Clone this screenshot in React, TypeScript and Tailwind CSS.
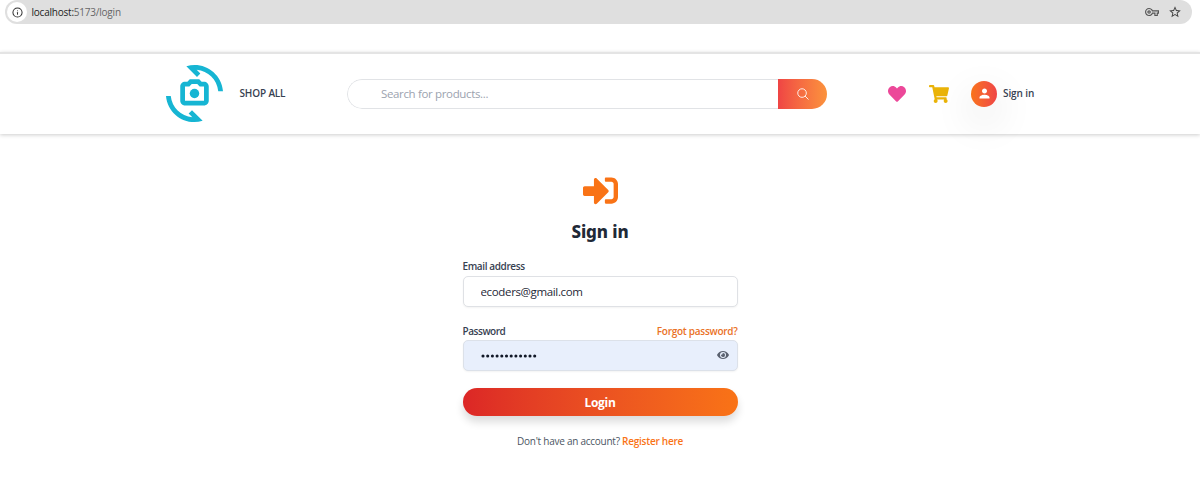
import { MdOutlineCameraswitch, MdPerson, MdOutlineVpnKey, MdOutlineStarBorder } from "react-icons/md";
import { FaHeart, FaSignInAlt, FaEye, FaShoppingCart } from "react-icons/fa";
import { IoSearchOutline } from "react-icons/io5";
import { Info } from "lucide-react";

function AddressBar() {
  return (
    <div className="ml-[5px] flex h-6 w-[1187px] items-center rounded-full bg-[#dfdfdf] pl-[2px] pr-[10px]">
      <span className="flex size-5 items-center justify-center rounded-full bg-white text-[#333]">
        <Info size={11} strokeWidth={2.2} />
      </span>
      <span className="ml-[4.5px] whitespace-nowrap text-[10px] leading-4 tracking-[-0.22px] text-[#666]">
        <span className="text-[#222]">localhost:</span>5173/login
      </span>
      <MdOutlineVpnKey className="ml-auto text-[#555]" size={14} />
      <MdOutlineStarBorder className="ml-[9px] text-[#444]" size={14} />
    </div>
  );
}

function Header() {
  return (
    <header className="mt-7 flex h-[82px] items-center border-t-2 border-[#e4e4e4] bg-white pb-px pl-[165.5px] shadow-[0_1px_4px_rgba(0,0,0,0.2)]">
      <MdOutlineCameraswitch className="text-[#16b5d3]" size={57} />
      <span className="ml-[17px] w-[107.5px] whitespace-nowrap text-[10px] font-semibold tracking-[-0.15px] text-[#374151]">SHOP ALL</span>
      <div className="flex h-[30px] w-[480px] overflow-hidden rounded-full">
        <input
          className="h-full w-[431px] rounded-l-full border border-r-0 border-[#e1e3e6] bg-white pl-[33px] text-[11.5px] tracking-[-0.35px] outline-none placeholder:text-[#9ca3af]"
          placeholder="Search for products..."
        />
        <button className="flex flex-1 items-center justify-center bg-linear-to-r from-[#ef4444] to-[#fb923c] text-white">
          <IoSearchOutline size={14} />
        </button>
      </div>
      <FaHeart className="ml-[61px] text-[#ec4899]" size={18} />
      <FaShoppingCart className="ml-[22.5px] text-[#eab308]" size={20} />
      <button className="ml-[22.5px] flex items-center gap-[6px] rounded-full">
        <span className="flex size-[26px] items-center justify-center rounded-full bg-linear-to-r from-[#f97316] to-[#ef4444] text-white shadow-[0_14px_40px_rgba(0,0,0,0.14)]">
          <MdPerson size={15} />
        </span>
        <span className="whitespace-nowrap text-[10px] font-semibold tracking-[-0.1px] text-[#374151]">Sign in</span>
      </button>
    </header>
  );
}

function LoginForm() {
  return (
    <main className="mx-auto flex w-[275px] flex-col pt-[39px]">
      <FaSignInAlt className="mx-auto text-[#f97316]" size={35} />
      <h1 className="mt-[10px] text-center font-['Noto_Sans',sans-serif] text-[17px] font-extrabold leading-7 tracking-[-0.1px] text-[#1f2937]">Sign in</h1>
      <label className="mt-[12px] text-[10px] font-semibold leading-4 tracking-[-0.38px] text-[#374151]">Email address</label>
      <input
        className="mt-[2px] h-[31px] rounded-[5px] border border-[#dfe1e5] bg-white pl-[17px] text-[11.5px] tracking-[-0.35px] text-[#1f2937] shadow-xs outline-none"
        defaultValue="ecoders@gmail.com"
      />
      <div className="mt-[16px] flex justify-between text-[10px] font-semibold leading-4">
        <label className="tracking-[-0.45px] text-[#374151]">Password</label>
        <a className="tracking-[-0.27px] text-[#ea7126]">Forgot password?</a>
      </div>
      <div className="mt-px flex h-[31px] items-center justify-between rounded-[5px] border border-[#dce1e9] bg-[#e8effc] pl-[17px] pr-2 shadow-xs">
        <svg width="56" height="4" viewBox="0 0 56 4" fill="#111827">
          {Array.from({ length: 12 }, (_, i) => (
            <circle key={i} cx={2 + i * 4.7} cy="2" r="1.55" />
          ))}
        </svg>
        <FaEye className="mb-[2px] text-[#5b6270]" size={12} />
      </div>
      <button className="mt-[17px] h-[28px] rounded-full bg-linear-to-r from-[#dc2626] to-[#f97316] pt-px text-[12px] font-bold tracking-[-0.3px] text-white shadow-[0_6px_9px_rgba(0,0,0,0.14)]">
        Login
      </button>
      <p className="mt-[17px] whitespace-nowrap text-center text-[10px] leading-4 tracking-[-0.25px] text-[#4b5563]">
        Don't have an account? <a className="font-semibold text-[#f97316]">Register here</a>
      </p>
    </main>
  );
}

export default function App() {
  return (
    <div className="h-[502px] w-[1200px] overflow-hidden bg-white font-['Open_Sans','Noto_Sans',sans-serif]">
      <AddressBar />
      <Header />
      <LoginForm />
    </div>
  );
}
